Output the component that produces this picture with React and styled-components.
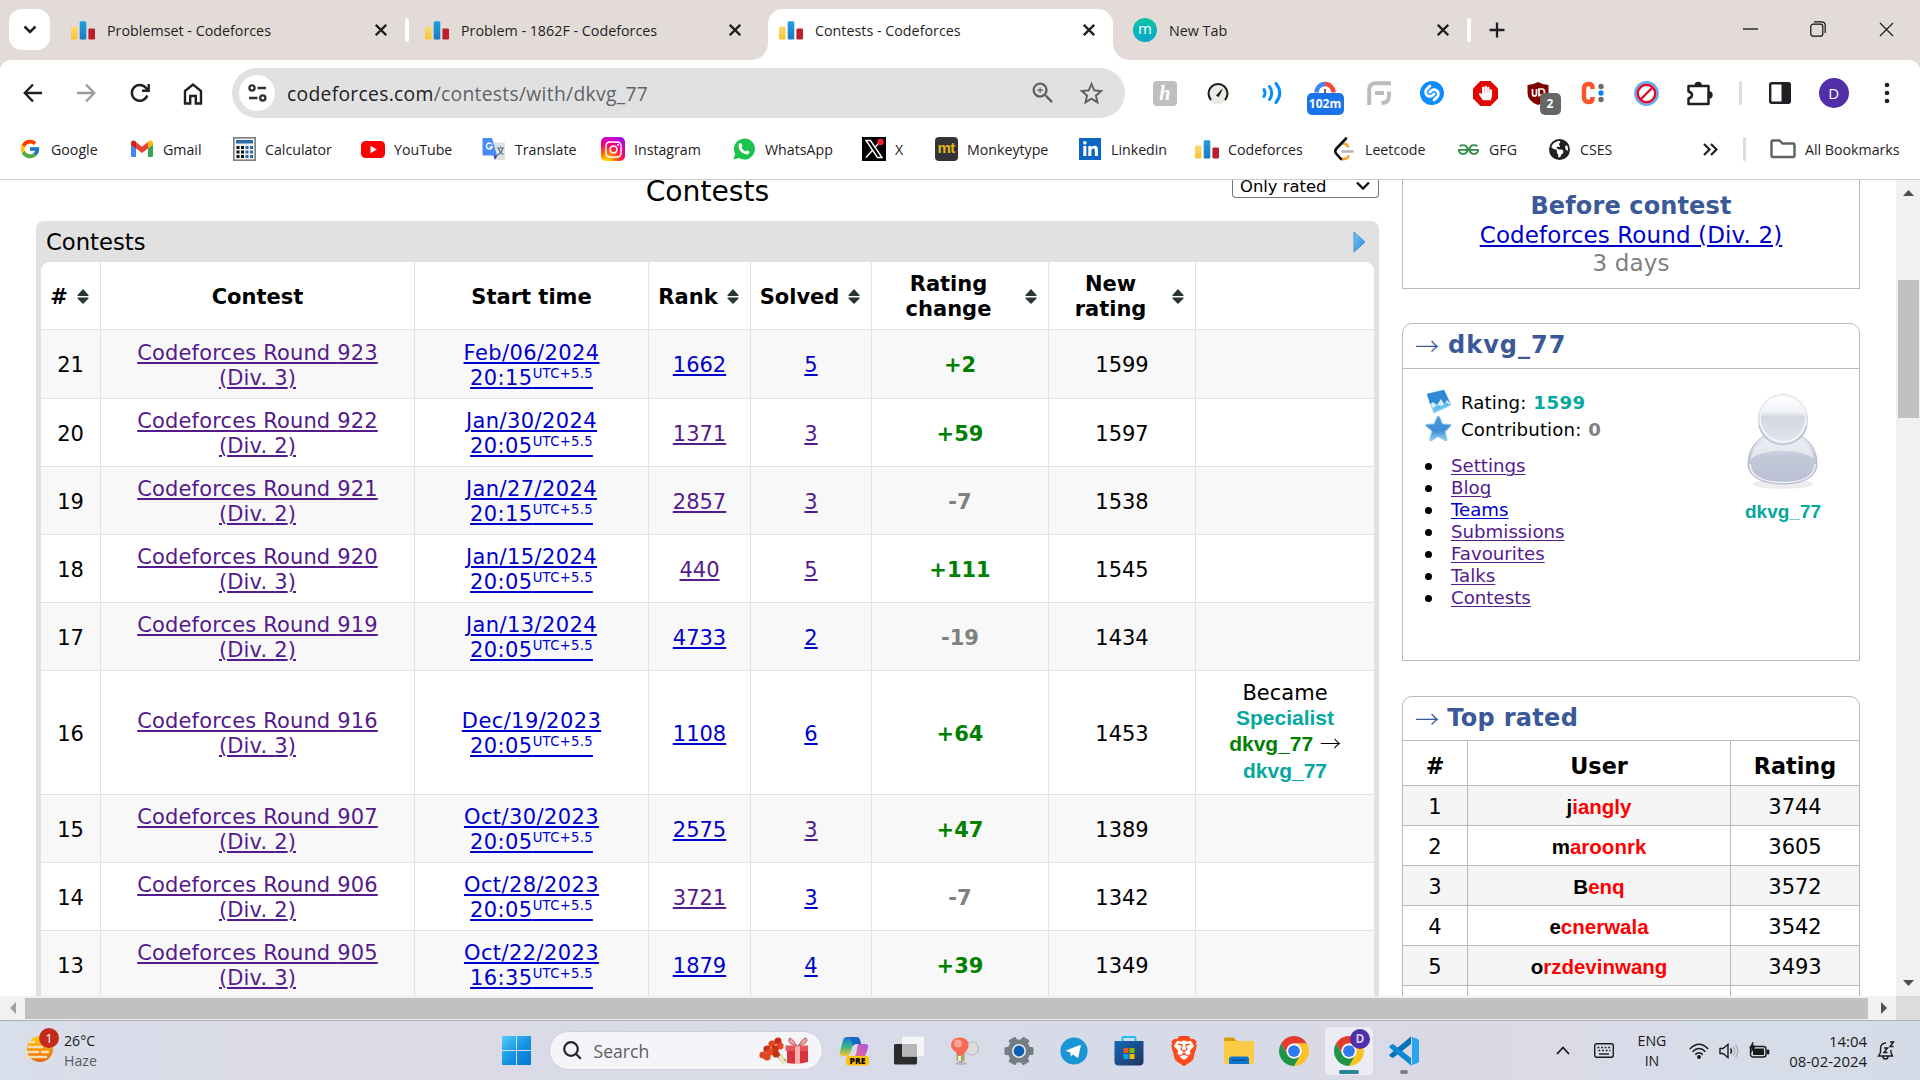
import React from "react";
import styled, { createGlobalStyle, css } from "styled-components";
import { FcGoogle } from "react-icons/fc";
import { FaInstagram, FaLinkedinIn, FaHandPaper } from "react-icons/fa";
import { SiGeeksforgeeks, SiShazam, SiBrave } from "react-icons/si";
import { MdStarOutline, MdOutlineExtension, MdZoomIn } from "react-icons/md";
import { FaEarthAmericas } from "react-icons/fa6";

const GlobalStyle = createGlobalStyle`
  * { box-sizing: border-box; }
  body { margin: 0; background: #fff; overflow: hidden; }
`;

const ui = css`font-family: "Open Sans", "Noto Sans", sans-serif;`;
const web = css`font-family: "DejaVu Sans", Verdana, sans-serif;`;
const handleFont = css`font-family: "Liberation Sans", Arial, sans-serif; font-weight: 700;`;

const Screen = styled.div`
  width: 1920px;
  height: 1080px;
  display: flex;
  flex-direction: column;
  overflow: hidden;
  background: #fff;
`;

/* ---------- tab strip ---------- */
const TabStrip = styled.header`
  ${ui}
  height: 60px;
  flex: none;
  display: flex;
  background: #e3dbd8;
`;
const TabSearch = styled.button`
  width: 41px;
  height: 41px;
  margin: 9px 10px 0 9px;
  padding: 0;
  border: 0;
  border-radius: 13px;
  background: #fff;
  display: grid;
  place-items: center;
`;
const Tab = styled.div`
  position: relative;
  width: ${(p) => (p.$active ? 345 : 354)}px;
  margin-right: ${(p) => (p.$active ? 9 : 0)}px;
  margin-top: 9px;
  height: 51px;
  padding: 0 3px 9px 11px;
  display: flex;
  align-items: center;
  background: ${(p) => (p.$active ? "#fff" : "transparent")};
  border-radius: 15px 15px 0 0;
  ${(p) =>
    p.$active &&
    css`
      &::before, &::after {
        content: "";
        position: absolute;
        bottom: 0;
        width: 16px;
        height: 16px;
      }
      &::before { left: -16px; background: radial-gradient(circle at 0 0, transparent 15.5px, #fff 16px); }
      &::after { right: -16px; background: radial-gradient(circle at 100% 0, transparent 15.5px, #fff 16px); }
    `}
`;
const TabTitle = styled.span`
  width: 268px;
  margin-left: 12px;
  font-size: 14.3px;
  color: #1f1f1f;
  white-space: nowrap;
`;
const TabEdge = styled.i`
  width: 4px;
  height: 24px;
  margin-left: 18px;
  border-radius: 2px;
  background: #fff;
`;
const NewTabButton = styled.div`
  width: 42px;
  height: 60px;
  display: grid;
  place-items: center;
`;
const WindowButtons = styled.div`
  margin-left: auto;
  display: flex;
`;
const WindowButton = styled.div`
  width: 68px;
  height: 58px;
  display: grid;
  place-items: center;
`;

/* ---------- toolbar ---------- */
const ToolbarBack = styled.div`
  flex: none;
  height: 66px;
  background: #e3dbd8;
`;
const Toolbar = styled.div`
  ${ui}
  height: 66px;
  padding: 0 6px;
  display: flex;
  align-items: center;
  background: #fff;
  border-radius: 11px 11px 0 0;
`;
const Slot = styled.div`
  position: relative;
  width: 53.5px;
  height: 50px;
  display: grid;
  place-items: center;
  flex: none;
`;
const Omnibox = styled.div`
  width: 893px;
  height: 50px;
  margin: 0 13px 0 12px;
  padding: 0 19px 0 7px;
  display: flex;
  align-items: center;
  border-radius: 25px;
  background: #e1e1e1;
  color: #5f6062;
`;
const SiteInfo = styled.div`
  width: 36px;
  height: 36px;
  border-radius: 50%;
  background: #fff;
  display: grid;
  place-items: center;
`;
const Url = styled.span`
  flex: 1;
  margin-left: 12px;
  font-size: 19.3px;
  letter-spacing: 0.3px;
  color: #606367;
  b { font-weight: 400; color: #1f2023; }
`;
const OmniIcon = styled.span`
  display: grid;
  place-items: center;
  width: 30px;
  margin-left: 18px;
`;
const Badge = styled.span`
  position: absolute;
  left: ${(p) => p.$left}px;
  top: 25px;
  width: ${(p) => p.$w}px;
  height: 22px;
  border-radius: 5px;
  background: ${(p) => p.$bg};
  color: #fff;
  font-size: 12px;
  font-weight: 700;
  line-height: 22px;
  text-align: center;
`;
const HoneyTile = styled.span`
  width: 24px;
  height: 25px;
  border-radius: 4px;
  background: #bfbfbf;
  color: #fff;
  font: italic 700 20px/24px "Liberation Serif", serif;
  text-align: center;
`;
const VRule = styled.i`
  width: 3px;
  height: 24px;
  border-radius: 2px;
  background: #e3dbd8;
  margin: ${(p) => p.$m};
`;
const Profile = styled.div`
  width: 30px;
  height: 30px;
  border-radius: 50%;
  background: #522fa8;
  color: #fff;
  font-size: 15px;
  line-height: 30px;
  text-align: center;
`;

/* ---------- bookmarks ---------- */
const Bookmarks = styled.nav`
  ${ui}
  height: 54px;
  flex: none;
  padding: 0 18px 7px 18px;
  display: flex;
  align-items: center;
  border-bottom: 1px solid #cbcbcb;
  background: #fff;
`;
const Bookmark = styled.div`
  width: ${(p) => p.$w}px;
  display: flex;
  align-items: center;
  gap: 9px;
  font-size: 14.2px;
  color: #1f2023;
  white-space: nowrap;
`;
const BookmarkIcon = styled.span`
  width: 24px;
  height: 24px;
  display: grid;
  place-items: center;
`;
const MtTile = styled.span`
  width: 23px;
  height: 24px;
  border-radius: 4px;
  background: #323437;
  color: #e2b714;
  font: 700 15px/22px "Liberation Sans", sans-serif;
  letter-spacing: -0.6px;
  text-align: center;
`;
const LinkedinTile = styled.span`
  width: 22px;
  height: 22px;
  background: #0a66c2;
  color: #fff;
  display: grid;
  place-items: center;
`;
const InstaTile = styled.span`
  width: 24px;
  height: 24px;
  border-radius: 5px;
  color: #fff;
  display: grid;
  place-items: center;
  background: radial-gradient(circle at 25% 105%, #ffd600 8%, #ff6a00 32%, #ff0169 55%, #d300c5 75%, #7b16ff 100%);
`;
const MonogramDot = styled.span`
  width: 24px;
  height: 24px;
  border-radius: 50%;
  background: linear-gradient(#0bc5a0, #0aa6cf);
  color: #fff;
  font-size: 15px;
  line-height: 21px;
  text-align: center;
`;

/* ---------- page ---------- */
const Viewport = styled.main`
  ${web}
  height: 816px;
  flex: none;
  display: flex;
  overflow: hidden;
  color: #000;
  font-size: 21px;
`;
const PageBody = styled.div`
  width: 1896px;
  display: flex;
  gap: 23px;
  padding-left: 36px;
`;
const MainColumn = styled.section`width: 1343px;`;
const TitleRow = styled.div`
  height: 41px;
  display: grid;
  grid-template-columns: 1fr auto 1fr;
  align-items: start;
`;
const Title = styled.h1`
  grid-column: 2;
  margin: 0;
  font-size: 28.2px;
  font-weight: 400;
  line-height: 23px;
`;
const Select = styled.div`
  justify-self: end;
  width: 147px;
  height: 18px;
  padding: 0 7px;
  display: flex;
  justify-content: space-between;
  align-items: flex-start;
  border: 1px solid #767676;
  border-top: 0;
  border-radius: 0 0 4px 4px;
  font-size: 16.4px;
  line-height: 13px;
  svg { margin-top: 1px; }
`;
const DataFrame = styled.div`
  width: 1343px;
  padding: 0 5px;
  background: #e1e1e1;
  border-radius: 8px 8px 0 0;
`;
const FrameCaption = styled.div`
  height: 41px;
  padding: 1px 8px 0 5px;
  display: flex;
  align-items: center;
  justify-content: space-between;
  font-size: 22.7px;
`;
const Grid = styled.div`
  border-radius: 9px 9px 0 0;
  overflow: hidden;
  background: #fff;
`;
const Row = styled.div`
  display: grid;
  grid-template-columns: 60px 314px 234px 102px 121px 177px 147px 178px;
  height: ${(p) => p.$h}px;
  background: ${(p) => (p.$odd ? "#f8f8f8" : "#fff")};
  border-bottom: 1px solid #e1e1e1;
  line-height: 25px;
`;
const Cell = styled.div`
  display: flex;
  align-items: center;
  justify-content: center;
  text-align: center;
  padding-top: 3px;
  letter-spacing: ${(p) => p.$ls || 0}px;
  border-right: 1px solid #e1e1e1;
  &:last-child { border-right: 0; }
`;
const HeadCell = styled(Cell)`
  font-weight: 700;
  padding-right: ${(p) => (p.$sort ? 11 : 0)}px;
  svg { margin-top: -2px; }
`;
const HeadText = styled.span`flex: 1;`;
const Link = styled.a`
  color: ${(p) => (p.$visited ? "#551a8b" : "#0000cc")};
  text-decoration: underline;
  text-decoration-thickness: ${(p) => (p.$thin ? "1px" : "2px")};
  text-underline-offset: 2px;
`;
const Zone = styled.sup`
  font-size: 13.2px;
  line-height: 0;
  vertical-align: 7px;
  letter-spacing: 0.3px;
`;
const Delta = styled.b`color: ${(p) => (p.$up ? "green" : "gray")};`;
const Handle = styled.span`
  ${handleFont}
  color: ${(p) => p.$c};
  font-size: ${(p) => p.$size || 21}px;
`;
const Promotion = styled.div`
  margin-top: -3px;
  line-height: 26.6px;
`;
const Became = styled.div`line-height: 24px;`;
const ThinArrow = styled.span`
  font-family: "Noto Sans CJK JP", "Noto Sans CJK SC", sans-serif;
  font-weight: 300;
  line-height: 1;
`;

/* ---------- sidebar ---------- */
const Sidebar = styled.aside`
  width: 458px;
  display: flex;
  flex-direction: column;
`;
const Box = styled.section`
  flex: none;
  height: ${(p) => p.$h}px;
  margin-top: ${(p) => p.$mt}px;
  border: 1px solid #b9b9b9;
  border-radius: ${(p) => (p.$square ? 0 : "10px 10px 0 0")};
`;
const Countdown = styled.div`
  padding-top: 21px;
  text-align: center;
  font-size: 23px;
  letter-spacing: 0.13px;
  line-height: 28.6px;
  color: gray;
`;
const CountdownTitle = styled.div`
  font-weight: 700;
  font-size: 24px;
  color: #3b5998;
`;
const Caption = styled.div`
  height: ${(p) => p.$h}px;
  padding: 0 0 2px 12px;
  display: flex;
  align-items: center;
  gap: 8px;
  border-bottom: 1px solid #b9b9b9;
  color: #3b5998;
  font-size: 24px;
  font-weight: 700;
  letter-spacing: ${(p) => p.$ls}px;
`;
const ProfileBody = styled.div`
  display: flex;
  justify-content: space-between;
  padding: 19px 36px 0 22px;
  font-size: 18.2px;
`;
const Stat = styled.div`
  height: 27px;
  display: flex;
  align-items: center;
  gap: 8px;
  white-space: pre;
  b { color: ${(p) => p.$c}; letter-spacing: 0.4px; margin-left: 1px; }
`;
const StatText = styled.span`
  padding-top: 1px;
  letter-spacing: 0.1px;
`;
const Menu = styled.ul`
  margin: 13px 0 0;
  padding: 0;
  line-height: 22px;
  list-style: none;
`;
const MenuItem = styled.li`
  display: flex;
  align-items: center;
  &::before {
    content: "";
    width: 7px;
    height: 7px;
    margin: 1px 19px 0 0;
    border-radius: 50%;
    background: #000;
  }
`;
const AvatarColumn = styled.div`
  width: 80px;
  padding-top: 5px;
  display: flex;
  flex-direction: column;
  align-items: center;
  gap: 10px;
`;
const TopRow = styled.div`
  display: grid;
  grid-template-columns: 65px 263px 1fr;
  height: ${(p) => p.$h}px;
  background: ${(p) => (p.$odd ? "#f5f5f5" : "#fff")};
  border-bottom: 1px solid #b9b9b9;
  font-weight: ${(p) => (p.$head ? 700 : 400)};
  font-size: ${(p) => (p.$head ? 22.3 : 21)}px;
`;
const TopCell = styled.div`
  display: grid;
  place-items: center;
  padding-top: ${(p) => p.$pt || 0}px;
  border-right: 1px solid #b9b9b9;
  &:last-child { border-right: 0; }
`;
const Legend = styled.span`
  ${handleFont}
  display: block;
  font-size: 20.5px;
  color: red;
  &::first-letter { color: #000; }
`;

/* ---------- scrollbars ---------- */
const VScroll = styled.div`
  width: 24px;
  background: #f1f1f1;
  display: flex;
  flex-direction: column;
  align-items: center;
  padding: 10px 0 10px;
`;
const VThumb = styled.div`
  width: 21px;
  height: 138px;
  margin: 84px 0 auto;
  background: #c1c1c1;
`;
const HScroll = styled.div`
  height: 24px;
  flex: none;
  display: flex;
  align-items: center;
  background: #f1f1f1;
`;
const HThumb = styled.div`
  width: 1843px;
  height: 21px;
  background: #c1c1c1;
`;
const HArrow = styled.div`
  width: ${(p) => p.$w}px;
  padding-left: ${(p) => p.$pl || 0}px;
  display: grid;
  place-items: center;
`;
const Corner = styled.div`
  width: 24px;
  height: 24px;
  background: #dcdcdc;
`;

/* ---------- taskbar ---------- */
const Taskbar = styled.footer`
  ${ui}
  flex: none;
  height: 60px;
  display: flex;
  align-items: center;
  border-top: 1px solid #adadb6;
  background: linear-gradient(90deg, #d8dfea 0, #dbdae7 15%, #d9dbe7 35%, #d7dae8 60%, #dcd9e6 78%, #d6dde9 90%, #d5dce8 100%);
`;
const Weather = styled.div`
  width: 489px;
  padding-left: 24px;
  display: flex;
  align-items: center;
  gap: 7px;
`;
const WeatherIcon = styled.div`
  position: relative;
  width: 33px;
  height: 46px;
`;
const AlertDot = styled.span`
  position: absolute;
  left: 15px;
  top: 0;
  width: 20px;
  height: 20px;
  border-radius: 50%;
  background: #c42b1c;
  color: #fff;
  font-size: 13px;
  line-height: 20px;
  text-align: center;
`;
const TwoLines = styled.div`
  font-size: ${(p) => p.$size || 14.2}px;
  line-height: 20px;
  color: #1a1a1a;
  text-align: ${(p) => p.$align || "left"};
  width: ${(p) => p.$w || "auto"};
  white-space: nowrap;
`;
const Muted = styled.div`color: #5a5b60;`;
const TaskSlot = styled.div`
  position: relative;
  width: 55px;
  height: 59px;
  display: grid;
  place-items: center;
  flex: none;
`;
const SearchPill = styled.div`
  width: 274px;
  height: 39px;
  margin: 0 3.5px 0 4.5px;
  padding: 0 13px;
  display: flex;
  align-items: center;
  border-radius: 20px;
  border: 1px solid #cfd0dc;
  background: #f4f4f9;
  font-size: 17.6px;
  color: #5c5c60;
  span { flex: 1; margin-left: 12px; }
`;
const ActiveTile = styled.div`
  width: 48px;
  height: 48px;
  border-radius: 5px;
  background: #ececf4;
  display: grid;
  place-items: center;
`;
const RunMark = styled.i`
  position: absolute;
  bottom: 6px;
  left: calc(50% - ${(p) => p.$w / 2}px);
  width: ${(p) => p.$w}px;
  height: 4px;
  border-radius: 2px;
  background: ${(p) => p.$c};
`;
const UserDot = styled.span`
  position: absolute;
  left: 29px;
  top: 8px;
  width: 20px;
  height: 20px;
  border-radius: 50%;
  background: #522fa8;
  color: #d5c8f2;
  font-size: 12px;
  font-weight: 700;
  line-height: 20px;
  text-align: center;
`;
const Tray = styled.div`
  margin-left: auto;
  padding-right: 19px;
  display: flex;
  align-items: center;
`;
const TraySlot = styled.div`
  width: ${(p) => p.$w}px;
  margin-left: ${(p) => p.$ml || 0}px;
  display: grid;
  place-items: center;
`;

/* ---------- drawings ---------- */
const CfIcon = () => (
  <svg width="24" height="24" viewBox="0 0 24 24">
    <defs>
      <linearGradient id="cfy" x2="0" y2="1"><stop stopColor="#fbd978" /><stop offset="1" stopColor="#f8c52c" /></linearGradient>
      <linearGradient id="cfb" x2="0" y2="1"><stop stopColor="#21a0dc" /><stop offset="1" stopColor="#1a7cc0" /></linearGradient>
    </defs>
    <rect x="0" y="8.500" width="6.600" height="13" rx="1.300" fill="url(#cfy)" />
    <rect x="8.700" y="3.200" width="6.600" height="18.300" rx="1.300" fill="url(#cfb)" />
    <rect x="17.400" y="10.500" width="6.600" height="11" rx="1.300" fill="#bc1f2b" />
  </svg>
);
const Cross = ({ s = 12, w = 2.3 }) => (
  <svg width={s} height={s} viewBox="0 0 12 12" stroke="#1f2023" strokeWidth={w} fill="none"><path d="M.8.8 11.2 11.2M11.2.8.8 11.2" /></svg>
);
const SortMark = () => (
  <svg width="12" height="15" viewBox="0 0 12 15" fill="#2a3538"><path d="M6 0 11.500 6V7H.5V6zM.5 8.500h11V9.500L6 15 .5 9.500z" /></svg>
);
const Tri = ({ d, c = "#505050", w = 12, h = 12 }) => (
  <svg width={w} height={h} viewBox={`0 0 ${w} ${h}`} fill={c}><path d={d} /></svg>
);
const Chrome = () => (
  <svg width="30" height="30" viewBox="0 0 48 48">
    <path fill="#e33b2e" d="M24 12H44.78A24 24 0 0 0 3.22 12L13.6 30A12 12 0 0 1 24 12Z" />
    <path fill="#fcc31e" d="M44.78 12H24A12 12 0 0 1 34.4 30L24 48A24 24 0 0 0 44.78 12Z" />
    <path fill="#1e9448" d="M3.22 12 13.6 30A12 12 0 0 0 34.4 30L24 48A24 24 0 0 1 3.22 12Z" />
    <circle cx="24" cy="24" r="12" fill="#fff" /><circle cx="24" cy="24" r="9.4" fill="#3079ee" />
  </svg>
);
const Avatar = () => (
  <svg width="76" height="98" viewBox="0 0 76 98">
    <defs>
      <linearGradient id="ab" x2="0" y2="1"><stop stopColor="#f3f4f8" /><stop offset=".45" stopColor="#c5cada" /><stop offset="1" stopColor="#b9bfd2" /></linearGradient>
      <linearGradient id="ah" x2="0" y2="1"><stop stopColor="#fff" /><stop offset=".35" stopColor="#f1f3f8" /><stop offset=".46" stopColor="#d3d7e3" /><stop offset="1" stopColor="#e3e6ee" /></linearGradient>
    </defs>
    <ellipse cx="38" cy="91" rx="30" ry="5" fill="#ececf1" />
    <path d="M3 71C3 55 14 39 38 39S72 55 72 71c0 14-16 20-34 20S3 85 3 71z" fill="url(#ab)" stroke="#b7bac8" />
    <path d="M6 66C8 52 18 44 38 44S67 52 69 66C58 55 18 55 6 66z" fill="#eceef5" opacity=".8" />
    <path d="M5 71c0 13 15 18.500 33 18.500S70 84 70 71" fill="none" stroke="#edeff6" strokeWidth="1.500" />
    <circle cx="38" cy="26" r="24.500" fill="url(#ah)" stroke="#d8dae1" />
    <path d="M14 32a24.500 24.500 0 0 0 48 0" fill="none" stroke="#babdcb" strokeWidth="1.300" />
    <circle cx="38" cy="26" r="22.800" fill="none" stroke="#f5f6fa" strokeWidth="1.500" />
  </svg>
);
const Vscode = () => (
  <svg width="30" height="30" viewBox="0 0 30 30">
    <path fill="#0a70b8" d="M22 0.500 22 8 4 22 1 20.500Q-.3 19 1 18z" />
    <path fill="#0b87d4" d="M22 29.500V22L4 8 1 9.500Q-.3 11 1 12z" />
    <path fill="#28a4f0" d="M21.500.2 28.500 3Q30 3.600 30 5V25q0 1.400-1.500 2L21.500 29.800Q23 29 23 27.500V2.500Q23 1 21.500.2z" />
  </svg>
);
const Gear = () => (
  <svg width="30" height="30" viewBox="0 0 30 30">
    <g fill="#747d84">{[0, 60, 120].map((a) => <rect key={a} x="11" y="0.500" width="8" height="29" rx="1.500" transform={`rotate(${a + 30} 15 15)`} />)}<circle cx="15" cy="15" r="11.500" /></g>
    <circle cx="15" cy="15" r="7" fill="#e9ebef" /><circle cx="15" cy="15" r="5.400" fill="#0c5fb5" />
  </svg>
);

const bookmarks = [
  ["Google", 112, <FcGoogle size={22} />],
  ["Gmail", 102, <svg width="22" height="18" viewBox="0 0 22 17"><path fill="#4285f4" d="M0 2.500V15q0 1.500 1.500 1.500H5V6.500z" /><path fill="#34a853" d="M22 2.500V15q0 1.500-1.500 1.500H17V6.500z" /><path fill="#ea4335" d="M5 1.500 11 6.200 17 1.500V8L11 12.600 5 8z" /><path fill="#c5221f" d="M0 2.500Q0 0 2.500 0 3.500 0 5 1.300V8L0 4.300z" /><path fill="#fbbc04" d="M22 2.500Q22 0 19.500 0 18.500 0 17 1.300V8l5-3.700z" /></svg>],
  ["Calculator", 129, <svg width="23" height="24" viewBox="0 0 23 24"><rect x=".8" y=".8" width="21.400" height="22.400" fill="#f4f4f4" stroke="#7e7e7e" strokeWidth="1.600" /><rect x="3" y="3" width="17" height="3.500" fill="#2d6aa8" />{[9, 13.5, 18].flatMap((y) => [3.5, 8, 12.5, 17].map((x, i) => <rect key={`${x}-${y}`} x={x} y={y} width="3" height="3" fill={i > 1 ? "#2d6aa8" : "#111"} />))}</svg>],
  ["YouTube", 121, <svg width="24" height="17" viewBox="0 0 24 17"><rect width="24" height="17" rx="4.500" fill="#f00" /><path d="M9.500 4.800v7.400l6.300-3.700z" fill="#fff" /></svg>],
  ["Translate", 119, <svg width="24" height="24" viewBox="0 0 24 24"><path d="M10 5.500h12q1 0 1 1V22q0 1-1 1H14z" fill="#e0e0e0" /><path d="M11 17.500h5L13 23z" fill="#3949ab" /><path d="M1.500 1H10l5 17.500H2q-1.500 0-1.500-1.500V2q0-1 1-1z" fill="#4a8af4" /><path d="M10 7.500A3 3 0 1 0 10.300 10H7.500" fill="none" stroke="#fff" strokeWidth="1.400" /><path d="M15 11h7M18.500 9.500V11M16.500 11q1.500 5 5 6.500M21 11q-1 4-5 7" fill="none" stroke="#607d8b" strokeWidth="1.200" /></svg>],
  ["Instagram", 131, <InstaTile><FaInstagram size={19} /></InstaTile>],
  ["WhatsApp", 130, <svg width="22" height="22" viewBox="0 0 22 22"><path d="M0.500 21.500 2.200 16A10.500 10.500 0 1 1 6 20z" fill="#19c34c" /><path d="M6.500 5.500q1-1 2 .3l.9 2q.2.700-.9 1.700 1.300 2.700 4 4 1.200-1.300 1.700-1.100l2.200 1.100q.5 2.500-2.600 2.900Q6.300 15.600 5.500 8.300 5.400 6.600 6.500 5.500z" fill="#fff" /></svg>],
  ["X", 72, <svg width="24" height="24" viewBox="0 0 24 24"><rect width="24" height="24" fill="#000" /><path d="M4 3.500h4.500L20 20.500h-4.500zM4 20.500l6.800-7.500M12.800 10.600 18 4.500" fill="none" stroke="#fff" strokeWidth="1.400" /><circle cx="18.500" cy="5" r="3.200" fill="#f4212e" /></svg>],
  ["Monkeytype", 144, <MtTile>mt</MtTile>],
  ["Linkedin", 117, <LinkedinTile><FaLinkedinIn size={17} /></LinkedinTile>],
  ["Codeforces", 137, <CfIcon />],
  ["Leetcode", 124, <svg width="22" height="24" viewBox="0 0 22 24" fill="none" strokeWidth="2.600" strokeLinecap="round"><path d="M9.500 14.500h10" stroke="#b3b3b3" /><path d="M9.500 6.500q3-.5 5.500 2.700M15.500 19.500q-3.500 4-8 2" stroke="#ffa116" /><path d="M13 1.500 3.500 11.500q-2.500 2.700 0 5.500l4.500 5" stroke="#111" /></svg>],
  ["GFG", 91, <SiGeeksforgeeks size={21} color="#2f8d46" />],
  ["CSES", 156, <FaEarthAmericas size={21} color="#202124" />],
];

const extensions = [
  <HoneyTile>h</HoneyTile>,
  <svg width="22" height="24" viewBox="0 0 22 24"><circle cx="11" cy="13" r="10.500" fill="#ebebe6" /><path d="M4 19A9.500 9.500 0 1 1 18 19" fill="none" stroke="#1b1b1b" strokeWidth="2" /><path d="M9.500 14.500 15 8.500l-3.500 7z" fill="#1b1b1b" stroke="#1b1b1b" /></svg>,
  <svg width="20" height="22" viewBox="0 0 20 22" fill="none" stroke="#0a8dfa" strokeWidth="3" strokeLinecap="round"><path d="M2 7.500q2 3.500 0 7M7.500 4.500q4.500 6.500 0 13M14 1.500q7.500 9.500 0 19" /></svg>,
  <><svg width="22" height="26" viewBox="0 0 22 26" fill="none" strokeWidth="4.500"><path d="M2.500 12.500A8.500 8.500 0 0 1 11 4" stroke="#4285f4" /><path d="M11 4a8.500 8.500 0 0 1 8.500 8.500" stroke="#f4483b" /><path d="M11 9v4" stroke="#333" strokeWidth="1.500" /></svg><Badge $left={8} $w={37} $bg="#1a73e8">102m</Badge></>,
  <svg width="24" height="24" viewBox="0 0 24 24" fill="none" stroke="#bcbcbc" strokeWidth="4"><path d="M2.200 24V9q0-6.800 6.800-6.800H24M8 12h9M22 10.500v4.500q0 7-7.500 7" /></svg>,
  <SiShazam size={24} color="#0a8cff" />,
  <svg width="25" height="25" viewBox="0 0 25 25"><path d="M7.500 0h10L25 7.500v10L17.500 25h-10L0 17.500v-10z" fill="#e10600" /><g transform="translate(5 4.500)"><FaHandPaper size={15} color="#fff" /></g></svg>,
  <><svg width="24" height="25" viewBox="0 0 24 25"><path d="M11 1q5 3 10.500 3v8q0 8-10.500 12Q.5 20 .5 12V4Q6 4 11 1z" fill="#800000" /><path d="M5.500 8v5q0 2 2 2t2-2V8M12 15.500V8h3q2.500 0 2.500 3T15 14h-3" stroke="#fff" strokeWidth="1.700" fill="none" /></svg><Badge $left={27} $w={21} $bg="#666">2</Badge></>,
  <svg width="24" height="24" viewBox="0 0 24 24"><path d="M11.500 8V6.500q0-3.500-4-3.500-4.500 0-4.500 5v8q0 5 4.500 5 4 0 4-3.500V16" fill="none" stroke="#fb542b" strokeWidth="4.500" /><circle cx="20" cy="5.500" r="2.700" fill="#6b6b6b" /><circle cx="20" cy="12" r="2.700" fill="#0a84f0" /><circle cx="20" cy="18.500" r="2.700" fill="#6b6b6b" /></svg>,
  <svg width="25" height="25" viewBox="0 0 25 25" fill="none"><circle cx="12.500" cy="12.500" r="11.200" stroke="#6aaaf5" strokeWidth="2.500" /><circle cx="12.500" cy="12.500" r="8.800" stroke="#e00b2b" strokeWidth="2.500" /><path d="m6.500 18.500 12-12" stroke="#e00b2b" strokeWidth="2.400" /></svg>,
  <svg width="27" height="27" viewBox="0 0 27 27" fill="#1f2023"><path d="M2.500 6h20v18h-20v-5.500q3.500-1 3.500-3.500t-3.500-3.500z" fill="none" stroke="#1f2023" strokeWidth="2.500" strokeLinejoin="round" /><path d="M8.500 5.500a3.700 3.700 0 0 1 7.400 0zM23 11.300a3.700 3.700 0 0 1 0 7.400z" /></svg>,
];

const contests = [
  [21, "923", 3, "Feb/06/2024", "20:15", 1662, 0, 5, 0, "+2", 1599],
  [20, "922", 2, "Jan/30/2024", "20:05", 1371, 1, 3, 1, "+59", 1597],
  [19, "921", 2, "Jan/27/2024", "20:15", 2857, 1, 3, 1, "-7", 1538],
  [18, "920", 3, "Jan/15/2024", "20:05", 440, 1, 5, 1, "+111", 1545],
  [17, "919", 2, "Jan/13/2024", "20:05", 4733, 0, 2, 0, "-19", 1434],
  [16, "916", 3, "Dec/19/2023", "20:05", 1108, 0, 6, 0, "+64", 1453],
  [15, "907", 2, "Oct/30/2023", "20:05", 2575, 0, 3, 1, "+47", 1389],
  [14, "906", 2, "Oct/28/2023", "20:05", 3721, 1, 3, 0, "-7", 1342],
  [13, "905", 3, "Oct/22/2023", "16:35", 1879, 0, 4, 0, "+39", 1349],
];
const heads = [["#", 1], ["Contest"], ["Start time"], ["Rank", 1], ["Solved", 1], ["Rating change", 1], ["New rating", 1], [""]];
const rowHeight = (n) => (n === 21 ? 69 : n === 16 ? 124 : 68);
const top = [["jiangly", 3744], ["maroonrk", 3605], ["Benq", 3572], ["ecnerwala", 3542], ["orzdevinwang", 3493]];
const menu = [["Settings", 1], ["Blog", 1], ["Teams", 0], ["Submissions", 1], ["Favourites", 1], ["Talks", 1], ["Contests", 1]];

const taskApps = [
  <svg width="30" height="30" viewBox="0 0 30 30"><defs><linearGradient id="c1" x2="0" y2="1"><stop stopColor="#1477d4" /><stop offset=".5" stopColor="#36b28a" /><stop offset="1" stopColor="#f4c62a" /></linearGradient><linearGradient id="c2" x1="1" x2="0" y2="1"><stop stopColor="#a557e8" /><stop offset="1" stopColor="#f7697c" /></linearGradient></defs><path d="M8 1h9q3 0 4 3l1 4h-5q-3 0-4 4l-2 6q-1 2-4 2H4q-4 0-3-4L4 4q1-3 4-3z" fill="url(#c1)" /><path d="M17 1q3 0 4 3l1 4h-5q-2 0-3 2L12 4q-1-3-4-3z" fill="#1766c8" /><path d="M19 8h7q4 0 3 4l-3 8q-1 2-4 2h-8q2-1 3-4z" fill="url(#c2)" /><rect x="7" y="20" width="23" height="9.500" rx="3" fill="#ffc20a" /><text x="18.500" y="28" fontSize="8.500" fontWeight="800" textAnchor="middle" fontFamily="Open Sans">PRE</text></svg>,
  <svg width="30" height="29" viewBox="0 0 30 29"><rect x="0" y="8" width="23" height="20.500" rx="1.500" fill="#2b2b2b" /><rect x="8" y="0.500" width="22" height="20" rx="1.500" fill="#f6f6f6" /><rect x="8" y="8" width="15" height="12.500" fill="#b7b7b9" /></svg>,
  <svg width="30" height="30" viewBox="0 0 30 30"><circle cx="23" cy="12.500" r="6.500" fill="#dcdcda" stroke="#b6b8b6" /><ellipse cx="12" cy="27.500" rx="6" ry="1.500" fill="#b4b6c0" /><path d="M10 1.500q9-.5 9.500 7.500 0 4-3.500 7L15 20H8L7 16Q2 13 2 9 2.500 2 10 1.500z" fill="#f46a52" /><circle cx="9" cy="7.500" r="4" fill="#fba594" /><path d="M7.500 19h8v5q-4 4.500-8 0z" fill="#a8a36b" /><path d="M9 20h3v5H9z" fill="#f0edc8" /></svg>,
  <Gear />,
  <svg width="28" height="28" viewBox="0 0 28 28"><circle cx="14" cy="14" r="13.600" fill="#1b96d4" /><path d="M5.500 13.800 20 8q1-.3.800.8L18.300 20q-.4 1-1.300.4l-4-3-2 2-.7-4z" fill="#fff" /></svg>,
  <svg width="30" height="30" viewBox="0 0 30 30"><defs><linearGradient id="ms" x2="1" y2="1"><stop stopColor="#0f69b8" /><stop offset="1" stopColor="#23355e" /></linearGradient></defs><path d="M8.500 7V2q0-1 1-1h11q1 0 1 1V7" fill="none" stroke="#1ec0f4" strokeWidth="2" /><path d="M.5 5H29.500V25.500q0 4-4 4h-21q-4 0-4-4z" fill="url(#ms)" /><path d="M9.500 12h5v5h-5z" fill="#f25022" /><path d="M15.500 12h5v5h-5z" fill="#7fba00" /><path d="M9.500 18h5v5h-5z" fill="#00a4ef" /><path d="M15.500 18h5v5h-5z" fill="#ffb900" /></svg>,
  <svg width="30" height="30" viewBox="0 0 30 30"><path d="M8 1h14l5 6-2 14-10 8L5 21 3 7z" fill="#fff" /><g><SiBrave size={30} color="#fb4a1c" /></g></svg>,
  <svg width="30" height="28" viewBox="0 0 30 28"><path d="M0 4V2q0-1.500 1.500-1.500h8L13 4v3H0z" fill="#dc9c00" /><rect y="4" width="30" height="23" rx="1" fill="#fccb45" /><path d="M5 27v-5q0-2.500 2.500-2.500h15Q25 19.500 25 22v5z" fill="#0f74cc" /><rect x="8" y="22.500" width="14" height="1.300" fill="#0a4f93" /></svg>,
  <Chrome />,
  <><ActiveTile><Chrome /></ActiveTile><UserDot>D</UserDot><RunMark $w={20} $c="#2a8396" /></>,
  <><Vscode /><RunMark $w={8} $c="#808084" /></>,
];

const nav = (d, c = "#1f2023") => (
  <svg width="20" height="20" viewBox="0 0 20 20" fill="none" stroke={c} strokeWidth="2.400"><path d={d} /></svg>
);

function ChromeTop() {
  const tabs = ["Problemset - Codeforces", "Problem - 1862F - Codeforces", "Contests - Codeforces", "New Tab"];
  return (
    <>
      <TabStrip>
        <TabSearch><svg width="14" height="9" viewBox="0 0 14 9" fill="none" stroke="#1f2023" strokeWidth="2.500"><path d="m1.500 1.500 5.500 5.500 5.500-5.500" /></svg></TabSearch>
        {tabs.map((t, i) => (
          <Tab key={t} $active={i === 2}>
            {i === 3 ? <MonogramDot>m</MonogramDot> : <CfIcon />}
            <TabTitle>{t}</TabTitle>
            <Cross />
            {(i === 0 || i === 3) && <TabEdge />}
          </Tab>
        ))}
        <NewTabButton><svg width="16" height="16" viewBox="0 0 16 16" stroke="#1f2023" strokeWidth="2.300"><path d="M8 0.500v15M.5 8h15" /></svg></NewTabButton>
        <WindowButtons>
          <WindowButton><svg width="15" height="2"><path d="M0 1h15" stroke="#000" strokeWidth="1.200" /></svg></WindowButton>
          <WindowButton><svg width="16" height="16" viewBox="0 0 16 16" fill="none" stroke="#111" strokeWidth="1.200"><rect x=".8" y="3.200" width="12" height="12" rx="2.500" /><path d="M4 .8h7.500q3.700 0 3.700 3.700V12" /></svg></WindowButton>
          <WindowButton><Cross s={15} w={1} /></WindowButton>
        </WindowButtons>
      </TabStrip>
      <ToolbarBack>
        <Toolbar>
          <Slot>{nav("M19 10H2.500M10 1.500 1.800 10l8.200 8.500")}</Slot>
          <Slot>{nav("M1 10h16.500M10 1.500l8.200 8.500-8.200 8.500", "#9b9b9b")}</Slot>
          <Slot>{nav("M17.200 12.500A7.900 7.900 0 1 1 16 5l2 2M18.700 1v6.700H12")}</Slot>
          <Slot><svg width="20" height="23" viewBox="0 0 20 23" fill="none" stroke="#1f2023" strokeWidth="2.400"><path d="M2 9 10 2.500 18 9v12.500H12.800V14H7.200v7.500H2z" /></svg></Slot>
          <Omnibox>
            <SiteInfo><svg width="19" height="18" viewBox="0 0 19 18" fill="none" stroke="#303134" strokeWidth="2.300"><circle cx="4" cy="4" r="2.600" /><path d="M9.500 4H18M1 14h8.500" /><circle cx="14.800" cy="14" r="2.600" /></svg></SiteInfo>
            <Url><b>codeforces.com</b>/contests/with/dkvg_77</Url>
            <OmniIcon><MdZoomIn size={28} /></OmniIcon>
            <OmniIcon><MdStarOutline size={29} /></OmniIcon>
          </Omnibox>
          {extensions.map((e, i) => <Slot key={i}>{e}</Slot>)}
          <VRule $m="0 12px 0 12px" />
          <Slot><svg width="22" height="22" viewBox="0 0 22 22"><rect x="1.200" y="1.200" width="19.600" height="19.600" rx="1.500" fill="none" stroke="#1f2023" strokeWidth="2.400" /><path d="M12.500 1H21v20h-8.500z" fill="#1f2023" /></svg></Slot>
          <Slot><Profile>D</Profile></Slot>
          <Slot><svg width="6" height="22" viewBox="0 0 6 22" fill="#1f2023"><circle cx="3" cy="3" r="2.300" /><circle cx="3" cy="11" r="2.300" /><circle cx="3" cy="19" r="2.300" /></svg></Slot>
        </Toolbar>
      </ToolbarBack>
      <Bookmarks>
        {bookmarks.map(([name, w, icon]) => (
          <Bookmark key={name} $w={w}><BookmarkIcon>{icon}</BookmarkIcon>{name}</Bookmark>
        ))}
        <svg width="15" height="13" viewBox="0 0 15 13" fill="none" stroke="#1f2023" strokeWidth="2.200"><path d="m1 1 5.500 5.500L1 12M8 1l5.500 5.500L8 12" /></svg>
        <VRule $m="0 24px 0 25px" />
        <Bookmark $w={132}>
          <svg width="26" height="20" viewBox="0 0 26 20" fill="none" stroke="#5f6062" strokeWidth="2.400"><path d="M1.500 16.500V3q0-1.500 1.500-1.500h6.500l3 3H23q1.500 0 1.500 1.500v10.500q0 1.500-1.500 1.500H3q-1.500 0-1.500-1.500z" /></svg>
          All Bookmarks
        </Bookmark>
      </Bookmarks>
    </>
  );
}

function ContestTable() {
  return (
    <DataFrame>
      <FrameCaption>
        Contests
        <svg width="13" height="22" viewBox="0 0 13 22"><defs><linearGradient id="pl" x2="1" y2="1"><stop stopColor="#7cc4f4" /><stop offset="1" stopColor="#2487d8" /></linearGradient></defs><path d="M1 1 12 11 1 21z" fill="url(#pl)" stroke="#4b94d0" /></svg>
      </FrameCaption>
      <Grid>
        <Row $h={68}>
          {heads.map(([t, s], i) => (
            <HeadCell key={i} $sort={s}><HeadText>{t}</HeadText>{s && <SortMark />}</HeadCell>
          ))}
        </Row>
        {contests.map(([n, round, div, day, time, rank, rv, solved, sv, delta, rating]) => (
          <Row key={n} $h={rowHeight(n)} $odd={n % 2 === 1}>
            <Cell>{n}</Cell>
            <Cell $ls={0.15}><Link $visited>Codeforces Round {round}<br />(Div. {div})</Link></Cell>
            <Cell $ls={0.4}><Link>{day}<br />{time}<Zone>UTC+5.5</Zone></Link></Cell>
            <Cell><Link $visited={rv}>{rank}</Link></Cell>
            <Cell><Link $visited={sv}>{solved}</Link></Cell>
            <Cell><Delta $up={delta[0] === "+"}>{delta}</Delta></Cell>
            <Cell>{rating}</Cell>
            <Cell>
              {n === 16 && (
                <Promotion>
                  <Became>Became</Became>
                  <Handle $c="#03a89e">Specialist</Handle><br />
                  <Handle $c="green">dkvg_77</Handle> <ThinArrow>→</ThinArrow><br />
                  <Handle $c="#03a89e">dkvg_77</Handle>
                </Promotion>
              )}
            </Cell>
          </Row>
        ))}
      </Grid>
    </DataFrame>
  );
}

function SideColumn() {
  return (
    <Sidebar>
      <Box $h={119} $mt={-10} $square>
        <Countdown>
          <CountdownTitle>Before contest</CountdownTitle>
          <Link>Codeforces Round (Div. 2)</Link>
          <div>3 days</div>
        </Countdown>
      </Box>
      <Box $h={338} $mt={34}>
        <Caption $h={45} $ls={1}><ThinArrow>→</ThinArrow>dkvg_77</Caption>
        <ProfileBody>
          <div>
            <Stat $c="#03a89e">
              <svg width="28" height="26" viewBox="0 0 28 26"><path d="M2 5 19 1l7 15-17 8z" fill="#d4edfa" stroke="#8fcdee" /><path d="M2 5 19 1l6 13-3-3-3 4-3-5-4 6-4-3-3 2z" fill="#3187d4" /><path d="m8 19 5-3 4 1 4-4 4 3-16 7z" fill="#5fbdf0" /></svg>
              <StatText>Rating: <b>1599</b></StatText>
            </Stat>
            <Stat $c="gray">
              <svg width="28" height="28" viewBox="0 0 28 28"><defs><linearGradient id="st" x2="0" y2="1"><stop stopColor="#4c97dc" /><stop offset=".6" stopColor="#3f8ed8" /><stop offset="1" stopColor="#9ad6f6" /></linearGradient></defs><path d="M13 1q1.500 0 2 2l2.500 6 8.500.5q1 1-6 7l2 8q0 2-2 1l-7-4-7 4.500q-1.500 0-1.200-2L7 16 1 11Q0 9.500 2 9.300L9 9l3-6.500z" fill="url(#st)" stroke="#8fc5ec" /></svg>
              <StatText>Contribution: <b>0</b></StatText>
            </Stat>
            <Menu>{menu.map(([t, v]) => <MenuItem key={t}><Link $thin $visited={v}>{t}</Link></MenuItem>)}</Menu>
          </div>
          <AvatarColumn>
            <Avatar />
            <Handle $c="#03a89e" $size={19}>dkvg_77</Handle>
          </AvatarColumn>
        </ProfileBody>
      </Box>
      <Box $h={340} $mt={35}>
        <Caption $h={44} $ls={0.3}><ThinArrow>→</ThinArrow>Top rated</Caption>
        <TopRow $h={45} $head><TopCell $pt={6}>#</TopCell><TopCell $pt={6}>User</TopCell><TopCell $pt={6}>Rating</TopCell></TopRow>
        {top.map(([name, rating], i) => (
          <TopRow key={name} $h={40} $odd={i % 2 === 0}>
            <TopCell $pt={2}>{i + 1}</TopCell><TopCell $pt={2}><Legend>{name}</Legend></TopCell><TopCell $pt={2}>{rating}</TopCell>
          </TopRow>
        ))}
        <TopRow $h={40}><TopCell /><TopCell /><TopCell /></TopRow>
      </Box>
    </Sidebar>
  );
}

function WindowsBar() {
  return (
    <Taskbar>
      <Weather>
        <WeatherIcon>
          <svg width="33" height="44" viewBox="0 0 33 44"><defs><linearGradient id="sun" x2="0" y2="1"><stop stopColor="#fcd00e" /><stop offset="1" stopColor="#ea6210" /></linearGradient></defs><circle cx="16" cy="21" r="13" fill="url(#sun)" /><g stroke="#f6dfae" strokeWidth="2.500" strokeLinecap="round"><path d="M6 14h4M5 19h13M2 24h12M18 24h6M2 29h20" /></g></svg>
          <AlertDot>1</AlertDot>
        </WeatherIcon>
        <TwoLines>26°C<Muted>Haze</Muted></TwoLines>
      </Weather>
      <TaskSlot>
        <svg width="29" height="29" viewBox="0 0 29 29"><defs><linearGradient id="win" x2="1" y2="1"><stop stopColor="#4fd0ff" /><stop offset=".5" stopColor="#1794e3" /><stop offset="1" stopColor="#0374d4" /></linearGradient></defs><path fill="url(#win)" d="M1 0h13v14H0V1q0-1 1-1zM15 0h13q1 0 1 1v13H15zM0 15h14v14H1q-1 0-1-1zM15 15h14v13q0 1-1 1H15z" /></svg>
      </TaskSlot>
      <SearchPill>
        <svg width="19" height="19" viewBox="0 0 19 19" fill="none" stroke="#252525" strokeWidth="2.200"><circle cx="8" cy="8" r="6.800" /><path d="m12.800 12.800 5 5" /></svg>
        <span>Search</span>
        <svg width="50" height="27" viewBox="0 0 50 27">
          <path d="m14 13 12 12" stroke="#3f9a3d" strokeWidth="4" /><path d="m19 20 4-3 4 9-4 1z" fill="#e8e0b8" />
          {[[4, 18], [8, 12], [13, 7], [19, 4], [21, 9], [16, 12], [11, 15], [17, 17], [8, 20]].map(([x, y], i) => <circle key={i} cx={x} cy={y} r="3.600" fill={i % 2 ? "#c92f14" : "#e0481f"} />)}
          <path d="M28 13h21v12q-10 3-21 1z" fill="#d8343c" /><path d="M26.500 8.500H49v5.500H26.500z" fill="#e9555b" /><path d="M36 8h5v19h-5z" fill="#f6b3ae" /><path d="M38 9Q30-3 30 3q-1 4 8 6zM39 9q8-12 9-6 0 4-9 6z" fill="#f4a3a0" stroke="#b85858" />
        </svg>
      </SearchPill>
      {taskApps.map((a, i) => <TaskSlot key={i}>{a}</TaskSlot>)}
      <Tray>
        <TraySlot $w={50}><svg width="14" height="9" viewBox="0 0 14 9" fill="none" stroke="#1a1a1a" strokeWidth="1.800"><path d="m1 8 6-6.500L13 8" /></svg></TraySlot>
        <TraySlot $w={32}><svg width="20" height="15" viewBox="0 0 20 15" fill="none" stroke="#1a1a1a" strokeWidth="1.400"><rect x=".7" y=".7" width="18.600" height="13.600" rx="2" /><path d="M3.500 4.500h13M4.500 7.500h12" strokeDasharray="1.800 1.800" /><path d="M5 11h10" /></svg></TraySlot>
        <TraySlot $w={64}><TwoLines $align="center">ENG<br />IN</TwoLines></TraySlot>
        <TraySlot $w={30}><svg width="20" height="16" viewBox="0 0 20 16" fill="none" stroke="#1a1a1a" strokeWidth="1.500"><path d="M.8 6q9.200-9.500 18.400 0M3.500 8.800q6.500-6.500 13 0M6.300 11.600q3.700-3.700 7.400 0" /><circle cx="10" cy="14" r="1.200" fill="#1a1a1a" /></svg></TraySlot>
        <TraySlot $w={30}><svg width="20" height="16" viewBox="0 0 20 16" fill="none" stroke="#1a1a1a" strokeWidth="1.400"><path d="M1 5.500h3L9 1.500v13L4 10.500H1zM11.500 5.500q2 2.500 0 5" /><path d="M14 3.500q3.500 4.500 0 9M16.500 1.500q4.500 6.500 0 13" stroke="#aeb0ba" /></svg></TraySlot>
        <TraySlot $w={30}><svg width="21" height="17" viewBox="0 0 21 17"><rect x="1.500" y="4.500" width="15.500" height="10.500" rx="2.500" fill="none" stroke="#1a1a1a" strokeWidth="1.400" /><rect x="4" y="6.500" width="11" height="6.500" fill="#1a1a1a" /><path d="M18 8h2v4h-2zM4 0 0.500 6H3L2 10.500 6.500 4H4z" fill="#1a1a1a" stroke="#1a1a1a" strokeWidth=".6" /></svg></TraySlot>
        <TwoLines $align="right" $w="93px" $size={14.9}>14:04<br />08-02-2024</TwoLines>
        <TraySlot $w={30} $ml={4}><svg width="18" height="19" viewBox="0 0 18 19" fill="none" stroke="#1a1a1a" strokeWidth="1.400"><path d="M9 2Q3.500 2 3.500 8v3.500L1.500 15h14l-1.500-3.500V9M6 15.500q0 2.500 2.500 2.500t2.500-2.500M7 7h3.500L7 11.500h3.500M13 1h3.500L13 5.500h3.500" /></svg></TraySlot>
      </Tray>
    </Taskbar>
  );
}

export default function App() {
  return (
    <Screen>
      <GlobalStyle />
      <ChromeTop />
      <Viewport>
        <PageBody>
          <MainColumn>
            <TitleRow>
              <Title>Contests</Title>
              <Select>Only rated<svg width="16" height="10" viewBox="0 0 16 10" fill="none" stroke="#111" strokeWidth="2.300"><path d="m2 1.500 6 6 6-6" /></svg></Select>
            </TitleRow>
            <ContestTable />
          </MainColumn>
          <SideColumn />
        </PageBody>
        <VScroll>
          <Tri d="M0 6 5.500 0 11 6z" w={11} h={6} />
          <VThumb />
          <Tri d="M0 0H11L5.500 6z" w={11} h={6} />
        </VScroll>
      </Viewport>
      <HScroll>
        <HArrow $w={25}><Tri d="M6 0V12L0 6z" c="#a3a3a3" w={6} /></HArrow>
        <HThumb />
        <HArrow $w={28} $pl={3}><Tri d="M0 0 6 6 0 12z" w={6} /></HArrow>
        <Corner />
      </HScroll>
      <WindowsBar />
    </Screen>
  );
}
